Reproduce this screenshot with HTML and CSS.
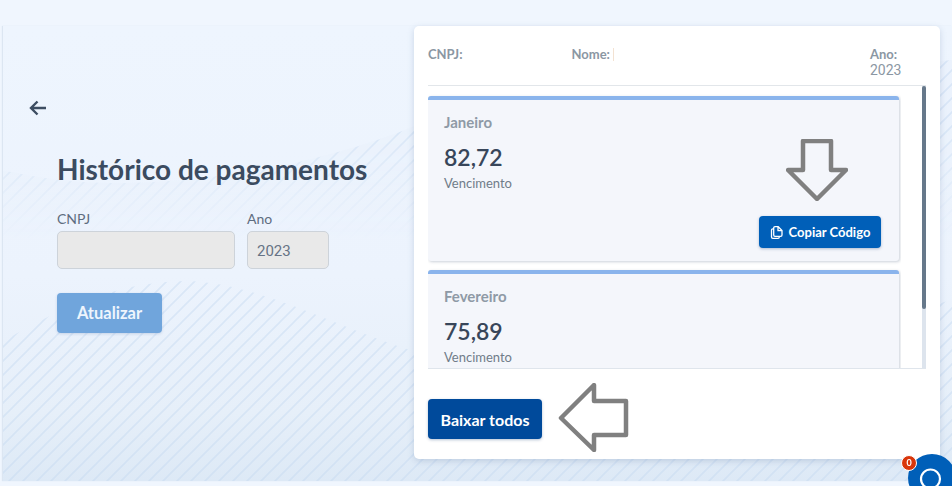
FILE: index.html
```html
<!DOCTYPE html>
<html lang="pt-BR">
<head>
  <meta charset="UTF-8" />
  <meta name="viewport" content="width=device-width, initial-scale=1.0" />
  <title>Histórico de pagamentos</title>
  <link rel="stylesheet" href="styles.css">
</head>
<body>
  <div class="page">
    <div class="panel">
      <!-- wave background -->
      <svg class="panel-bg" viewBox="3 26 949 455" width="949" height="455" aria-hidden="true">
        <defs>
          <pattern id="hatch" patternUnits="userSpaceOnUse" width="14" height="14">
            <path d="M-2 2L2 -2M0 14L14 0M12 16L16 12" stroke="#c3d8f0" stroke-width="1.6" fill="none" />
          </pattern>
          <linearGradient id="fade" x1="0" y1="125" x2="0" y2="240" gradientUnits="userSpaceOnUse">
            <stop offset="0" stop-color="#fff" stop-opacity=".5" />
            <stop offset="1" stop-color="#fff" stop-opacity="0" />
          </linearGradient>
          <mask id="fadeMask" maskUnits="userSpaceOnUse" x="0" y="0" width="952" height="486">
            <rect x="0" y="0" width="952" height="486" fill="url(#fade)" />
          </mask>
        </defs>
        <g mask="url(#fadeMask)">
          <path d="M0 170C40 178 70 184 130 183C220 180 320 165 420 124L952 60V486H0Z" fill="#e8f0fb" />
          <path d="M0 170C40 178 70 184 130 183C220 180 320 165 420 124L952 60V486H0Z" fill="url(#hatch)" />
        </g>
        <path d="M0 343C50 314 110 282 185 281C260 282 340 330 420 353C600 380 800 340 952 300V486H0Z" fill="url(#hatch)" opacity=".45" />
      </svg>

      <section class="filters">
        <a class="back" href="#" aria-label="Voltar">
          <svg viewBox="0 0 18 16" width="18" height="16">
            <path d="M17 8H2M8.500 1.500L2 8L8.500 14.500" fill="none" stroke="#3d4d62" stroke-width="2.400" />
          </svg>
        </a>
        <div class="filters-body">
          <h1>Histórico de pagamentos</h1>
          <div class="fields">
            <div class="field field-cnpj">
              <label for="cnpj">CNPJ</label>
              <input type="text" id="cnpj" disabled />
            </div>
            <div class="field field-ano">
              <label for="ano">Ano</label>
              <input type="text" id="ano" value="2023" disabled />
            </div>
          </div>
          <button class="btn-update">Atualizar</button>
        </div>
      </section>

      <section class="card">
        <div class="card-head">
          <div><b>CNPJ:</b></div>
          <div><b>Nome:</b><span class="redacted"></span></div>
          <div><b>Ano:</b><br><span class="year">2023</span></div>
        </div>

        <div class="months-box">
          <div class="months">
            <article class="month">
              <h3>Janeiro</h3>
              <div class="value">82,72</div>
              <div class="due">Vencimento</div>
              <button class="btn-copy">
                <svg viewBox="0 0 14 14" width="14" height="15">
                  <path d="M5 1.200H8.200L12 5V9.500A1.300 1.300 0 0 1 10.700 10.800H5A1.300 1.300 0 0 1 3.700 9.500V2.500A1.300 1.300 0 0 1 5 1.200ZM8 1.400V5.200H11.800M3.700 3.400H2.800A1.300 1.300 0 0 0 1.500 4.700V11.500A1.300 1.300 0 0 0 2.800 12.800H8A1.300 1.300 0 0 0 9.300 11.500V10.800" fill="none" stroke="#fff" stroke-width="1.300" />
                </svg>
                Copiar Código
              </button>
            </article>
            <article class="month">
              <h3>Fevereiro</h3>
              <div class="value">75,89</div>
              <div class="due">Vencimento</div>
            </article>
          </div>
          <div class="scroll-track"><div class="scroll-thumb"></div></div>
        </div>

        <button class="btn-all">Baixar todos</button>

        <!-- arrows drawn on top of the screenshot -->
        <svg class="arrow arrow-down" viewBox="786 139 62 62" width="62" height="62">
          <path d="M803 141H831V170H846L817 199L788 170H803Z" />
        </svg>
        <svg class="arrow arrow-left" viewBox="558 383 71 69" width="71" height="69">
          <path d="M561 418L594 385V401H626V435H594V450Z" />
        </svg>
      </section>
    </div>
  </div>

  <div class="chat">
    <span class="chat-badge">0</span>
    <div class="chat-ball">
      <svg viewBox="0 0 48 48" width="48" height="48">
        <circle cx="22.500" cy="25" r="9.500" fill="none" stroke="#fff" stroke-width="2.200" />
      </svg>
    </div>
  </div>
</body>
</html>
```

FILE: styles.css
```css
* {
  box-sizing: border-box;
}
html, body {
  height: 100%;
}
body {
  font-family: Lato, 'Noto Sans', sans-serif;
  margin: 0;
  background: #f0f6fe;
  overflow: hidden;
}
.page {
  padding: 26px 0 0 3px;
}
.panel {
  position: relative;
  display: flex;
  height: 455px;
  background: linear-gradient(#eef5fe 0%, #ecf3fd 55%, #e6eff9 85%, #dde9f6 100%);
  box-shadow: -1px 0 1px #dce6f2;
}
.panel-bg {
  position: absolute;
  left: 0;
  top: 0;
}
.filters {
  position: relative;
  width: 411px;
  padding: 74px 0 0 26px;
}
.back {
  display: block;
  height: 16px;
}
.back svg {
  display: block;
}
.filters-body {
  margin: 36px 0 0 28px;
}
h1 {
  margin: 0;
  font-size: 28px;
  line-height: 34px;
  font-weight: 700;
  color: #3b4b60;
}
.fields {
  display: flex;
  gap: 12px;
  margin-top: 24px;
}
.field-cnpj {
  width: 178px;
}
.field-ano {
  width: 82px;
}
.field label {
  display: block;
  font-size: 14px;
  line-height: 17px;
  margin-bottom: 4px;
  color: #5f6d80;
}
.field input {
  display: block;
  width: 100%;
  height: 38px;
  padding: 2px 9px 0;
  border: 1px solid #cdd3da;
  border-radius: 5px;
  background: #e9e9e9;
  font-family: Roboto, sans-serif;
  font-size: 15px;
  color: #667385;
}
.btn-update {
  display: block;
  width: 105px;
  height: 40px;
  margin-top: 24px;
  border: none;
  border-radius: 4px;
  background: #70a5dc;
  color: #eef5fd;
  font-family: Lato, sans-serif;
  font-size: 16.500px;
  font-weight: 700;
  box-shadow: 0 1px 3px rgba(60, 100, 160, 0.2);
}
.card {
  position: relative;
  width: 526px;
  height: 433px;
  padding: 0 14px;
  background: #fff;
  border-radius: 5px;
  box-shadow: 0 2px 6px rgba(90, 120, 160, 0.25);
}
.card-head {
  display: grid;
  grid-template-columns: 143.500px 298.500px 1fr;
  height: 60px;
  padding-top: 20px;
  border-bottom: 1px solid #e2e6ea;
  font-size: 13px;
  line-height: 16px;
  color: #8b97a3;
}
.card-head b {
  font-weight: 700;
}
.redacted {
  display: inline-block;
  width: 1px;
  height: 13px;
  margin-left: 3px;
  vertical-align: -2px;
  background: #f3e2d2;
}
.year {
  font-family: Roboto, sans-serif;
  font-size: 14px;
}
.months-box {
  display: flex;
  justify-content: space-between;
  height: 283px;
  border-bottom: 1px solid #dfe5ec;
}
.months {
  width: 473px;
  padding: 10px 2px 0 0;
  overflow: hidden;
}
.scroll-track {
  width: 4px;
  background: #dde4ed;
}
.scroll-thumb {
  height: 223px;
  border-radius: 2px;
  background: #66788a;
}
.month {
  display: flex;
  flex-direction: column;
  height: 165px;
  margin-bottom: 9px;
  padding: 13px 18px 13px 16px;
  background: #f4f6fb;
  border-top: 4px solid #8ab4ec;
  border-radius: 3px;
  box-shadow: 1px 1px 3px rgba(80, 100, 130, 0.3);
}
.month h3 {
  margin: 0;
  font-size: 15px;
  line-height: 18px;
  font-weight: 700;
  color: #8f9aa6;
}
.value {
  margin-top: 11px;
  font-size: 23px;
  line-height: 30px;
  font-weight: 600;
  color: #38465a;
}
.due {
  margin-top: 3px;
  font-size: 13px;
  line-height: 16px;
  color: #707c89;
}
.btn-copy {
  display: flex;
  align-items: center;
  justify-content: center;
  gap: 5px;
  width: 122px;
  height: 32px;
  margin: auto 0 0 auto;
  border: none;
  border-radius: 4px;
  background: #005fb8;
  color: #fff;
  font-family: Lato, sans-serif;
  font-size: 13px;
  font-weight: 700;
  box-shadow: 0 1px 3px rgba(0, 50, 110, 0.3);
}
.btn-all {
  display: block;
  width: 114px;
  height: 40px;
  margin-top: 30px;
  border: none;
  border-radius: 4px;
  background: #004a9b;
  color: #fff;
  font-family: Lato, sans-serif;
  font-size: 16px;
  font-weight: 700;
  box-shadow: 0 1px 3px rgba(0, 50, 110, 0.3);
}
.arrow {
  position: absolute;
}
.arrow path {
  fill: none;
  stroke: #808080;
  stroke-width: 4.500;
  stroke-linejoin: round;
}
.arrow-down {
  left: 372px;
  top: 113px;
}
.arrow-left {
  left: 144px;
  top: 357px;
}
.chat {
  position: fixed;
  left: 901px;
  top: 454px;
}
.chat-ball {
  width: 48px;
  height: 48px;
  margin-left: 7px;
  border-radius: 50%;
  background: #005fb8;
}
.chat-ball svg {
  display: block;
}
.chat-badge {
  position: absolute;
  left: 0;
  top: 1px;
  width: 16px;
  height: 16px;
  border: 1.500px solid #fff;
  border-radius: 50%;
  background: #d9360b;
  color: #fff;
  font-family: Lato, sans-serif;
  font-size: 9px;
  font-weight: 700;
  line-height: 13px;
  text-align: center;
}
```
